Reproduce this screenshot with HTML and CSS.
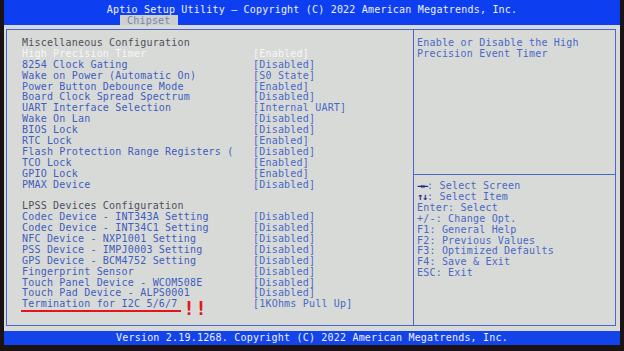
FILE: index.html
```html
<!DOCTYPE html>
<html lang="en">

<head>
  <meta charset="UTF-8">
  <meta name="viewport" content="width=device-width, initial-scale=1.0">
  <title>Aptio Setup Utility - Chipset</title>
  <link rel="stylesheet" href="styles.css">
</head>

<body>
  <div class="screen">
    <header class="topbar">
      <div class="title">Aptio Setup Utility – Copyright (C) 2022 American Megatrends, Inc.</div>
      <div class="tabs"><span class="tab">Chipset</span></div>
    </header>

    <main class="content">
      <div class="frame">
        <section class="settings">
          <div class="row heading">Miscellaneous Configuration</div>
          <div class="row selected"><span class="label">High Precision Timer</span><span class="value">[Enabled]</span></div>
          <div class="row"><span class="label">8254 Clock Gating</span><span class="value">[Disabled]</span></div>
          <div class="row"><span class="label">Wake on Power (Automatic On)</span><span class="value">[S0 State]</span></div>
          <div class="row"><span class="label">Power Button Debounce Mode</span><span class="value">[Enabled]</span></div>
          <div class="row"><span class="label">Board Clock Spread Spectrum</span><span class="value">[Disabled]</span></div>
          <div class="row"><span class="label">UART Interface Selection</span><span class="value">[Internal UART]</span></div>
          <div class="row"><span class="label">Wake On Lan</span><span class="value">[Disabled]</span></div>
          <div class="row"><span class="label">BIOS Lock</span><span class="value">[Disabled]</span></div>
          <div class="row"><span class="label">RTC Lock</span><span class="value">[Enabled]</span></div>
          <div class="row"><span class="label">Flash Protection Range Registers (</span><span class="value">[Disabled]</span></div>
          <div class="row"><span class="label">TCO Lock</span><span class="value">[Enabled]</span></div>
          <div class="row"><span class="label">GPIO Lock</span><span class="value">[Enabled]</span></div>
          <div class="row"><span class="label">PMAX Device</span><span class="value">[Disabled]</span></div>
          <div class="row"></div>
          <div class="row heading">LPSS Devices Configuration</div>
          <div class="row"><span class="label">Codec Device - INT343A Setting</span><span class="value">[Disabled]</span></div>
          <div class="row"><span class="label">Codec Device - INT34C1 Setting</span><span class="value">[Disabled]</span></div>
          <div class="row"><span class="label">NFC Device - NXP1001 Setting</span><span class="value">[Disabled]</span></div>
          <div class="row"><span class="label">PSS Device - IMPJ0003 Setting</span><span class="value">[Disabled]</span></div>
          <div class="row"><span class="label">GPS Device - BCM4752 Setting</span><span class="value">[Disabled]</span></div>
          <div class="row"><span class="label">Fingerprint Sensor</span><span class="value">[Disabled]</span></div>
          <div class="row"><span class="label">Touch Panel Device - WCOM508E</span><span class="value">[Disabled]</span></div>
          <div class="row"><span class="label">Touch Pad Device - ALPS0001</span><span class="value">[Disabled]</span></div>
          <div class="row"><span class="label"><span class="marked">Termination for I2C 5/6/7</span><span class="bang">!!</span></span><span class="value">[1KOhms Pull Up]</span></div>
        </section>

        <aside class="help">
          <div class="help-desc">
            Enable or Disable the High<br>
            Precision Event Timer
          </div>
          <div class="keys">
            <div><span class="arrow">→←</span>: Select Screen</div>
            <div><span class="arrow">↑↓</span>: Select Item</div>
            <div>Enter: Select</div>
            <div>+/-: Change Opt.</div>
            <div>F1: General Help</div>
            <div>F2: Previous Values</div>
            <div>F3: Optimized Defaults</div>
            <div>F4: Save &amp; Exit</div>
            <div>ESC: Exit</div>
          </div>
        </aside>
      </div>
    </main>

    <footer class="bottombar">Version 2.19.1268. Copyright (C) 2022 American Megatrends, Inc.</footer>
  </div>
</body>

</html>
```

FILE: styles.css
```css
body {
  margin: 0;
  background-color: #1b1213;
  font-family: "DejaVu Sans Mono", "Liberation Mono", monospace;
  font-size: 10px;
  letter-spacing: 0.2px;
}

.screen {
  margin-left: 4px;
  width: 616px;
}

.topbar {
  background-color: #0d3ff0;
  height: 25px;
}

.title {
  color: #eef0ff;
  text-align: center;
  padding-top: 4px;
  height: 11px;
  line-height: 11px;
}

.tabs {
  padding-left: 116px;
}

.tab {
  display: inline-block;
  height: 10px;
  line-height: 11px;
  padding: 0 7px;
  background-color: #cdcfd0;
  color: #7a88ab;
}

.content {
  background-color: #d8dad7;
  padding: 4px 4px 5px 2px;
}

.frame {
  display: flex;
  height: 295px;
  border: 1px solid #4a66c8;
}

.settings {
  width: 391px;
  padding: 8px 0 0 15px;
  border-right: 1px solid #4a66c8;
  color: #3f5dc0;
}

.row {
  display: flex;
  height: 10.9px;
  line-height: 10.9px;
  white-space: pre;
}

.row .label {
  position: relative;
  width: 231px;
}

.row .value {
  color: #4a68c8;
}

.heading {
  color: #4c505c;
}

.selected .label,
.selected .value {
  color: #f6f7f8;
}

.marked {
  border-bottom: 2px solid #e8141c;
  padding: 0 3px 1px 1px;
  margin-left: -1px;
}

.bang {
  position: absolute;
  left: 161px;
  top: 1px;
  color: #e8141c;
  font-weight: bold;
  font-size: 20px;
  line-height: 17px;
  letter-spacing: 0;
}

.help {
  flex: 1;
  display: flex;
  flex-direction: column;
  color: #4a68c8;
}

.help-desc {
  height: 144px;
  box-sizing: border-box;
  padding: 8px 0 0 3px;
  line-height: 10.5px;
}

.keys {
  border-top: 1px solid #4a66c8;
  padding: 6px 0 0 3px;
  line-height: 10.9px;
}

.arrow {
  color: #1b2b8c;
  font-weight: bold;
  letter-spacing: -1px;
}

.bottombar {
  background-color: #1244ea;
  color: #eef0ff;
  text-align: center;
  height: 14px;
  line-height: 14px;
}
```
